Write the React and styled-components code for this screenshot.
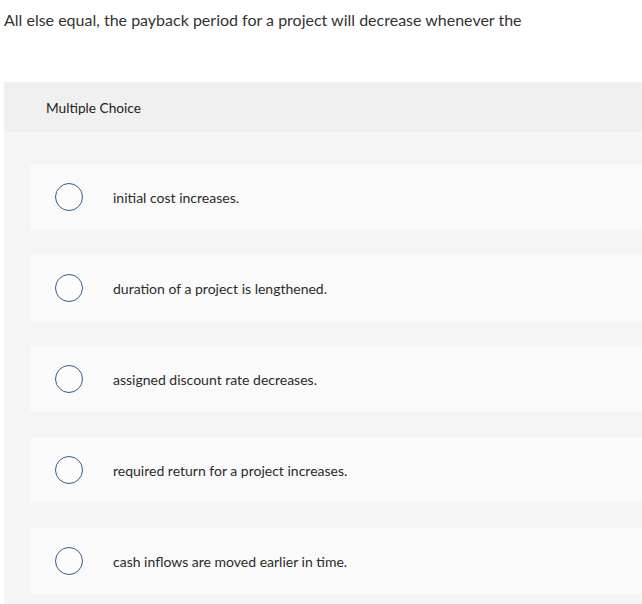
import React from 'react';
import styled, { createGlobalStyle } from 'styled-components';

const GlobalStyle = createGlobalStyle`
  body {
    margin: 0;
    background: #fff;
    font-family: Lato, "Liberation Sans", sans-serif;
    color: #333;
  }
`;

const Page = styled.div`
  padding: 0 0 0 4px;
  width: 638px;
`;

const Question = styled.p`
  margin: 0;
  padding-top: 10px;
  height: 82px;
  box-sizing: border-box;
  font-size: 16px;
  line-height: 20px;
  color: #333;
`;

const Panel = styled.div`
  background: #f5f5f5;
`;

const PanelHeader = styled.div`
  height: 50px;
  display: flex;
  align-items: center;
  padding-left: 42px;
  background: #f0f0f0;
  font-size: 13.7px;
  color: #222;
`;

const Options = styled.div`
  display: flex;
  flex-direction: column;
  gap: 25px;
  padding: 32px 0 12px 26px;
`;

const Option = styled.label`
  display: flex;
  align-items: center;
  height: 66px;
  background: #fafafa;
  border-radius: 3px 0 0 3px;
  padding-left: 25px;
  cursor: pointer;
`;

const Radio = styled.span`
  width: 28px;
  height: 28px;
  box-sizing: border-box;
  border: 1.5px solid #2f5e8d;
  border-radius: 50%;
  background: #fcfcfc;
  flex-shrink: 0;
`;

const OptionText = styled.span`
  margin-left: 30px;
  font-size: 14px;
  color: #2b2b2b;
`;

const choices = [
  'initial cost increases.',
  'duration of a project is lengthened.',
  'assigned discount rate decreases.',
  'required return for a project increases.',
  'cash inflows are moved earlier in time.',
];

const App = () => (
  <>
    <GlobalStyle />
    <Page>
      <Question>All else equal, the payback period for a project will decrease whenever the</Question>
      <Panel>
        <PanelHeader>Multiple Choice</PanelHeader>
        <Options>
          {choices.map((c) => (
            <Option key={c}>
              <Radio />
              <OptionText>{c}</OptionText>
            </Option>
          ))}
        </Options>
      </Panel>
    </Page>
  </>
);

export default App;
